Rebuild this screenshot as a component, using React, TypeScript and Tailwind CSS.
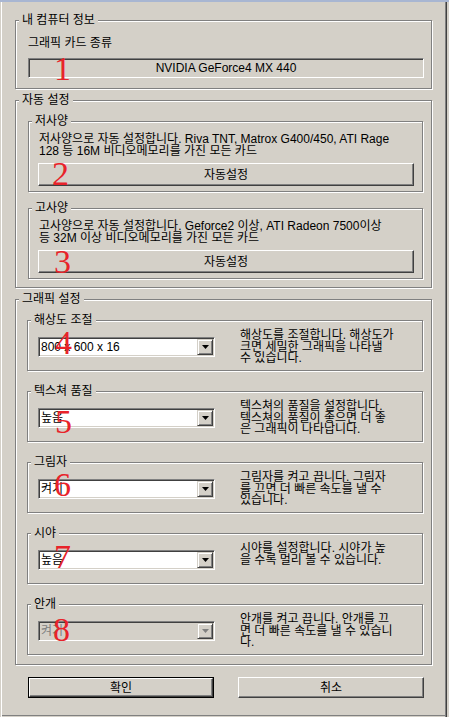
import React from "react";

type GroupProps = { label: string; className?: string; children?: React.ReactNode };

function Group({ label, className = "", children }: GroupProps) {
  return (
    <div className={`relative border border-[#808080] shadow-[1px_1px_0_#fff,inset_1px_1px_0_#fff] ${className}`}>
      <span className="absolute top-[-8px] left-[3px] bg-[#d4d0c8] px-[3px] leading-[14px] whitespace-nowrap">{label}</span>
      {children}
    </div>
  );
}

function Btn({ children, className = "", primary = false }: { children: React.ReactNode; className?: string; primary?: boolean }) {
  if (primary) {
    return (
      <div className={`border border-black ${className}`}>
        <div className="h-full flex items-center justify-center border border-t-white border-l-white border-r-[#404040] border-b-[#404040] shadow-[inset_-1px_-1px_0_#808080]">
          {children}
        </div>
      </div>
    );
  }
  return (
    <div className={`flex items-center justify-center border border-t-white border-l-white border-r-[#404040] border-b-[#404040] shadow-[inset_-1px_-1px_0_#808080] ${className}`}>
      {children}
    </div>
  );
}

function Combo({ value, disabled = false }: { value: string; disabled?: boolean }) {
  return (
    <div
      className={`mt-[16px] w-[177px] h-[20px] shrink-0 flex items-center p-[1px] border border-t-[#808080] border-l-[#808080] border-r-white border-b-white shadow-[inset_1px_1px_0_#404040,inset_-1px_-1px_0_#d4d0c8] ${
        disabled ? "bg-[#d4d0c8] text-[#808080]" : "bg-white text-black"
      }`}
    >
      <span className="flex-1 pl-[1px] leading-[14px] whitespace-nowrap">{value}</span>
      <div className="w-[16px] h-[16px] flex items-center justify-center bg-[#d4d0c8] border border-t-[#d4d0c8] border-l-[#d4d0c8] border-r-[#404040] border-b-[#404040] shadow-[inset_1px_1px_0_#fff,inset_-1px_-1px_0_#808080]">
        <svg width="7" height="4" viewBox="0 0 7 4">
          <polygon points="0,0 7,0 3.5,4" fill={disabled ? "#808080" : "#000"} />
        </svg>
      </div>
    </div>
  );
}

const settings = [
  { label: "해상도 조절", value: "800 x 600 x 16", lines: ["해상도를 조절합니다. 해상도가", "크면 세밀한 그래픽을 나타낼", "수 있습니다."] },
  { label: "텍스쳐 품질", value: "높음", lines: ["텍스쳐의 품질을 설정합니다.", "텍스쳐의 품질이 좋으면 더 좋", "은 그래픽이 나타납니다."] },
  { label: "그림자", value: "켜기", lines: ["그림자를 켜고 끕니다. 그림자", "를 끄면 더 빠른 속도를 낼 수", "있습니다."] },
  { label: "시야", value: "높음", lines: ["시야를 설정합니다. 시야가 높", "을 수록 멀리 볼 수 있습니다."] },
  { label: "안개", value: "켜기", disabled: true, lines: ["안개를 켜고 끕니다. 안개를 끄", "면 더 빠른 속도를 낼 수 있습니", "다."] },
];

const marks = [
  { n: "1", pos: "left-[54px] top-[52px]" },
  { n: "2", pos: "left-[52px] top-[157px]" },
  { n: "3", pos: "left-[54px] top-[245px]" },
  { n: "4", pos: "left-[55px] top-[326px]" },
  { n: "5", pos: "left-[55px] top-[405px]" },
  { n: "6", pos: "left-[54px] top-[468px]" },
  { n: "7", pos: "left-[54px] top-[540px]" },
  { n: "8", pos: "left-[53px] top-[613px]" },
];

export default function App() {
  return (
    <div className="relative w-[449px] h-[717px] overflow-hidden bg-[#d4d0c8] pt-[20px] text-[12px] text-black font-['Liberation_Sans','Noto_Sans_CJK_KR',sans-serif] shadow-[inset_0_2px_0_#a8b6d2,inset_1px_0_0_#d4d0c8,inset_2px_0_0_#fff,inset_-2px_0_0_#d4d0c8,inset_-3px_0_0_#404040,inset_-4px_0_0_#808080,inset_0_-1px_0_#d4d0c8,inset_0_-2px_0_#808080]">
      {/* 내 컴퓨터 정보 */}
      <Group label="내 컴퓨터 정보" className="ml-[15px] w-[417px] h-[69px] pt-[15px]">
        <p className="pl-[12px] leading-[14px]">그래픽 카드 종류</p>
        <div className="mt-[8px] ml-[12px] w-[396px] h-[20px] flex items-center justify-center border border-t-[#808080] border-l-[#808080] border-r-white border-b-white shadow-[inset_1px_1px_0_#404040]">
          NVIDIA GeForce4 MX 440
        </div>
      </Group>

      {/* 자동 설정 */}
      <Group label="자동 설정" className="mt-[11px] ml-[15px] w-[417px] h-[188px] pt-[20px]">
        <Group label="저사양" className="ml-[12px] w-[395px] h-[71px] pt-[11px]">
          <p className="pl-[10px] leading-[12px] whitespace-nowrap">
            저사양으로 자동 설정합니다. Riva TNT, Matrox G400/450, ATI Rage
            <br />
            128 등 16M 비디오메모리를 가진 모든 카드
          </p>
          <Btn className="ml-[9px] mt-[6px] w-[376px] h-[23px]">자동설정</Btn>
        </Group>
        <Group label="고사양" className="mt-[16px] ml-[12px] w-[395px] h-[71px] pt-[11px]">
          <p className="pl-[10px] leading-[12px] whitespace-nowrap">
            고사양으로 자동 설정합니다. Geforce2 이상, ATI Radeon 7500이상
            <br />
            등 32M 이상 비디오메모리를 가진 모든 카드
          </p>
          <Btn className="ml-[9px] mt-[6px] w-[376px] h-[23px]">자동설정</Btn>
        </Group>
      </Group>

      {/* 그래픽 설정 */}
      <Group label="그래픽 설정" className="mt-[11px] ml-[15px] w-[417px] h-[366px] pt-[20px]">
        <div className="flex flex-col gap-[20px]">
          {settings.map((s) => (
            <Group key={s.label} label={s.label} className="ml-[11px] w-[396px] h-[51px]">
              <div className="flex items-start pl-[10px]">
                <Combo value={s.value} disabled={s.disabled} />
                <div className="ml-[25px] mt-[9px] leading-[11.5px] whitespace-nowrap">
                  {s.lines.map((l) => (
                    <div key={l}>{l}</div>
                  ))}
                </div>
              </div>
            </Group>
          ))}
        </div>
      </Group>

      <div className="mt-[12px] ml-[28px] flex gap-[24px]">
        <Btn primary className="w-[186px] h-[21px]">확인</Btn>
        <Btn className="w-[186px] h-[21px]">취소</Btn>
      </div>

      {marks.map((m) => (
        <span
          key={m.n}
          className={`absolute ${m.pos} text-[34px] leading-[34px] text-[#e8232a] font-['Liberation_Serif',serif] pointer-events-none`}
        >
          {m.n}
        </span>
      ))}
    </div>
  );
}
